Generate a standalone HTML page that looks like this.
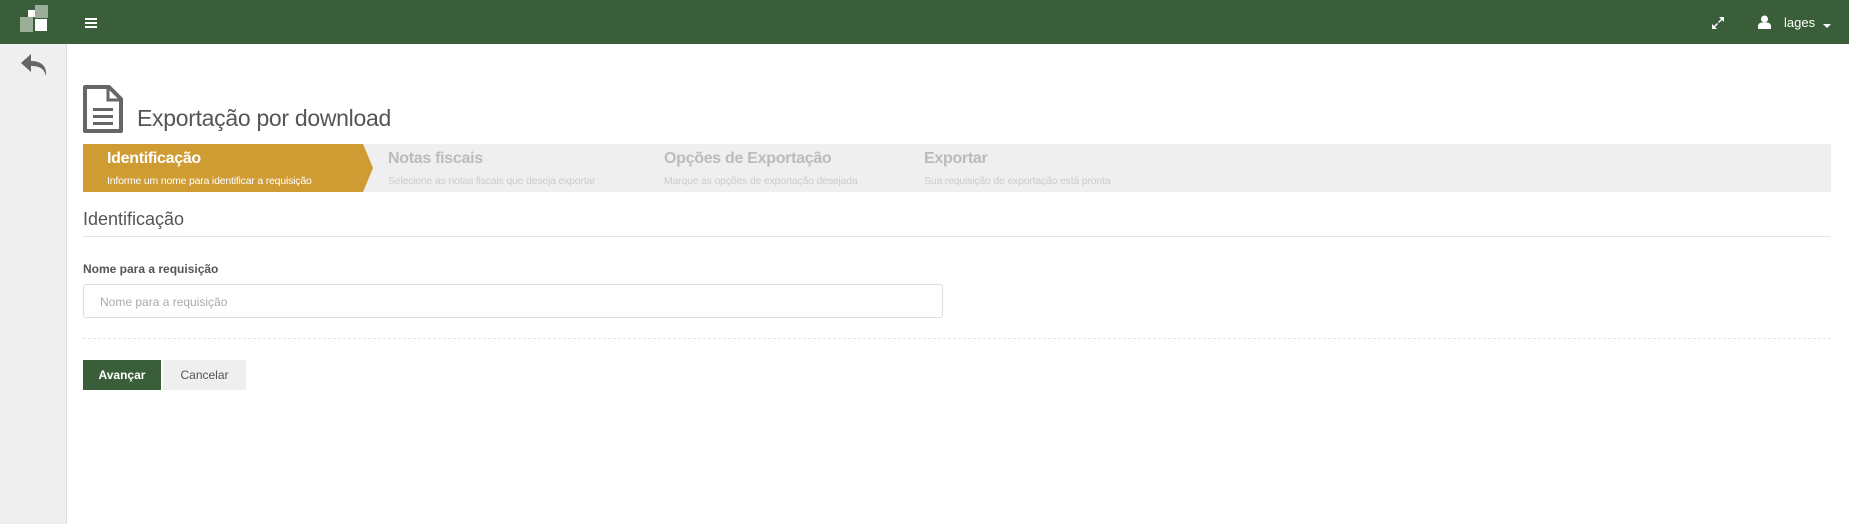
<!DOCTYPE html>
<html><head><meta charset="utf-8"><style>
*{margin:0;padding:0;box-sizing:border-box}
body{width:1849px;height:524px;overflow:hidden;background:#fff;font-family:"Liberation Sans",sans-serif;position:relative}
.a{position:absolute}
.hdr{left:0;top:0;width:1849px;height:44px;background:#3b5e3a}
.side{left:0;top:44px;width:67px;height:480px;background:#efefef;border-right:1px solid #ddd}
.bar{left:83px;top:144px;width:1748px;height:48px;background:#efefef}
.st{font-size:16px;font-weight:bold;color:#bbb;letter-spacing:-0.3px}
.ss{font-size:10.5px;color:#ccc;letter-spacing:-0.2px}
</style></head><body>
<div class="a hdr"></div>
<div class="a" style="left:20px;top:17px;width:13px;height:15px;background:#9aae98"></div>
<div class="a" style="left:35px;top:5px;width:13px;height:13px;background:#9aae98"></div>
<div class="a" style="left:28px;top:10px;width:7px;height:7px;background:#fff"></div>
<div class="a" style="left:35px;top:19px;width:12px;height:12px;background:#fff"></div>
<div class="a" style="left:85px;top:18px;width:12px;height:2px;background:#fff;box-shadow:0 4px 0 #fff,0 8px 0 #fff"></div>
<svg class="a" style="left:1711px;top:16px" width="14" height="14" viewBox="0 0 14 14"><path d="M8 1h5v5l-2-2-3 3-1-1 3-3zM6 13H1V8l2 2 3-3 1 1-3 3z" fill="#fff"/></svg>
<svg class="a" style="left:1758px;top:15px" width="13" height="14" viewBox="0 0 13 14"><circle cx="6.5" cy="4" r="3.5" fill="#fff"/><path d="M0 14v-3c0-2 2-3.5 4-3.5h5c2 0 4 1.5 4 3.5v3z" fill="#fff"/></svg>
<div class="a" style="left:1784px;top:15px;color:#fff;font-size:13px">lages</div>
<div class="a" style="left:1823px;top:24px;width:0;height:0;border-left:4px solid transparent;border-right:4px solid transparent;border-top:4px solid #fff"></div>
<div class="a side"></div>
<svg class="a" style="left:19px;top:52px" width="30" height="28" viewBox="0 0 30 28"><path d="M12 2 2 11l10 9v-6c8 0 13 2 15 10 1-9-4-15-15-15z" fill="#666"/></svg>
<svg class="a" style="left:82px;top:84px" width="42" height="50" viewBox="0 0 42 50"><path d="M3 3h24l12 12v32H3z" fill="none" stroke="#666" stroke-width="4" stroke-linejoin="round"/><path d="M26 3v13h13" fill="none" stroke="#666" stroke-width="3"/><rect x="11" y="24" width="20" height="3" fill="#666"/><rect x="11" y="31" width="20" height="3" fill="#666"/><rect x="11" y="38" width="20" height="3" fill="#666"/></svg>
<div class="a" style="left:137px;top:105px;font-size:23px;color:#555;letter-spacing:-0.3px">Exportação por download</div>
<div class="a bar"></div>
<svg class="a" style="left:83px;top:144px" width="292" height="48"><path d="M0 0H280L290 24 280 48H0z" fill="#cf9b33"/></svg>
<div class="a st" style="left:107px;top:150px;color:#fff">Identificação</div>
<div class="a ss" style="left:107px;top:175px;color:#fff">Informe um nome para identificar a requisição</div>
<div class="a st" style="left:388px;top:150px">Notas fiscais</div>
<div class="a ss" style="left:388px;top:175px">Selecione as notas fiscais que deseja exportar</div>
<div class="a st" style="left:664px;top:150px">Opções de Exportação</div>
<div class="a ss" style="left:664px;top:175px">Marque as opções de exportação desejada</div>
<div class="a st" style="left:924px;top:150px">Exportar</div>
<div class="a ss" style="left:924px;top:175px">Sua requisição de exportação está pronta</div>
<div class="a" style="left:83px;top:209px;font-size:18px;color:#555">Identificação</div>
<div class="a" style="left:83px;top:236px;width:1748px;height:1px;background:#e3e3e3"></div>
<div class="a" style="left:83px;top:262px;font-size:12px;font-weight:bold;color:#555">Nome para a requisição</div>
<div class="a" style="left:83px;top:284px;width:860px;height:34px;border:1px solid #ddd;border-radius:3px"></div>
<div class="a" style="left:100px;top:295px;font-size:12px;color:#aaa">Nome para a requisição</div>
<div class="a" style="left:83px;top:338px;width:1748px;border-top:1px dashed #e6e6e6"></div>
<div class="a" style="left:83px;top:360px;width:78px;height:30px;background:#3b5e3a;color:#fff;font-size:12px;font-weight:bold;text-align:center;line-height:30px">Avançar</div>
<div class="a" style="left:163px;top:360px;width:83px;height:30px;background:#efefef;color:#555;font-size:12px;text-align:center;line-height:30px">Cancelar</div>
</body></html>
